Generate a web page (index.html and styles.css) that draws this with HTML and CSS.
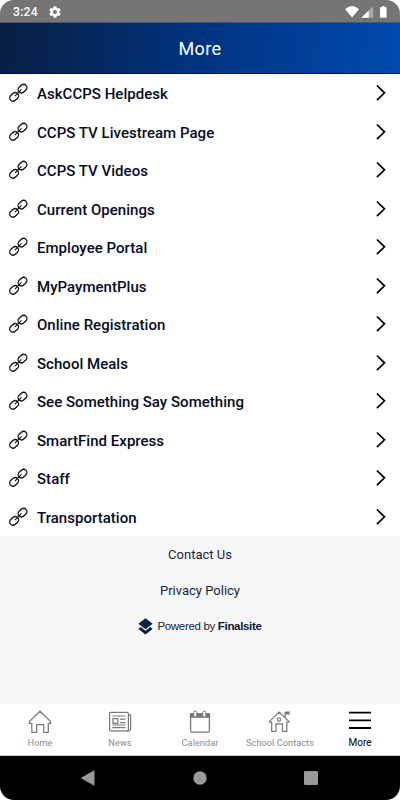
FILE: index.html
```
<!DOCTYPE html>
<html lang="en">
<head>
<meta charset="utf-8">
<title>More</title>
<link rel="stylesheet" href="styles.css">
</head>
<body>
<svg width="0" height="0" class="defs">
  <symbol id="link" viewBox="0 0 20 20">
    <g fill="none" stroke="#111" stroke-width="1.3">
      <rect x="-4.8" y="-3.3" width="9.6" height="6.6" rx="3.3" transform="translate(14.5 5.6) rotate(-43)"/>
      <rect x="-4.8" y="-3.3" width="9.6" height="6.6" rx="3.3" transform="translate(6.1 13.9) rotate(-43)"/>
      <path d="M6.9 13.1 13.5 6.4" stroke-width="1.1"/>
    </g>
  </symbol>
  <symbol id="chev" viewBox="0 0 12 18">
    <path d="M1.9 1.5 9.5 8.8 1.9 16.2" fill="none" stroke="#000" stroke-width="1.7"/>
  </symbol>
</svg>
<div class="screen">
  <div class="status">
    <span class="time">3:24</span>
    <svg class="gear" width="14" height="14" viewBox="2 2 20 20"><path fill="#fff" d="M19.14 12.94c.04-.3.06-.61.06-.94s-.02-.64-.07-.94l2.03-1.58a.49.49 0 0 0 .12-.61l-1.92-3.32a.49.49 0 0 0-.59-.22l-2.39.96a7 7 0 0 0-1.62-.94l-.36-2.54a.48.48 0 0 0-.48-.41h-3.84a.48.48 0 0 0-.47.41l-.36 2.54c-.59.24-1.13.57-1.62.94l-2.39-.96a.48.48 0 0 0-.59.22L2.74 8.87a.48.48 0 0 0 .12.61l2.03 1.58c-.05.3-.09.63-.09.94s.02.64.07.94l-2.03 1.58a.49.49 0 0 0-.12.61l1.92 3.32c.12.22.37.29.59.22l2.39-.96c.5.38 1.03.7 1.62.94l.36 2.54c.05.24.24.41.48.41h3.84c.24 0 .44-.17.47-.41l.36-2.54c.59-.24 1.13-.56 1.62-.94l2.39.96c.22.08.47 0 .59-.22l1.92-3.32a.48.48 0 0 0-.12-.61zM12 15.4a3.4 3.4 0 1 1 0-6.8 3.4 3.4 0 0 1 0 6.8z"/></svg>
    <svg class="signals" width="44" height="14" viewBox="0 0 44 14">
      <path d="M.2 4.2Q7.1-2.2 14 4.2L7.1 12.4z" fill="#fff"/>
      <path d="M28.2 1v11.8H16.4z" fill="#a9a9a9"/><path d="M23.7 5.5v7.3H16.4z" fill="#fff"/>
      <path d="M37 1h2.5v1.2H41.6v10.6H35V2.2h2z" fill="#fff"/>
    </svg>
  </div>
  <header>More</header>
  <main>
    <a class="row"><svg class="link"><use href="#link"/></svg><span>AskCCPS Helpdesk</span><svg class="chev"><use href="#chev"/></svg></a>
    <a class="row"><svg class="link"><use href="#link"/></svg><span>CCPS TV Livestream Page</span><svg class="chev"><use href="#chev"/></svg></a>
    <a class="row"><svg class="link"><use href="#link"/></svg><span>CCPS TV Videos</span><svg class="chev"><use href="#chev"/></svg></a>
    <a class="row"><svg class="link"><use href="#link"/></svg><span>Current Openings</span><svg class="chev"><use href="#chev"/></svg></a>
    <a class="row"><svg class="link"><use href="#link"/></svg><span>Employee Portal</span><svg class="chev"><use href="#chev"/></svg></a>
    <a class="row"><svg class="link"><use href="#link"/></svg><span>MyPaymentPlus</span><svg class="chev"><use href="#chev"/></svg></a>
    <a class="row"><svg class="link"><use href="#link"/></svg><span>Online Registration</span><svg class="chev"><use href="#chev"/></svg></a>
    <a class="row"><svg class="link"><use href="#link"/></svg><span>School Meals</span><svg class="chev"><use href="#chev"/></svg></a>
    <a class="row"><svg class="link"><use href="#link"/></svg><span>See Something Say Something</span><svg class="chev"><use href="#chev"/></svg></a>
    <a class="row"><svg class="link"><use href="#link"/></svg><span>SmartFind Express</span><svg class="chev"><use href="#chev"/></svg></a>
    <a class="row"><svg class="link"><use href="#link"/></svg><span>Staff</span><svg class="chev"><use href="#chev"/></svg></a>
    <a class="row"><svg class="link"><use href="#link"/></svg><span>Transportation</span><svg class="chev"><use href="#chev"/></svg></a>
  </main>
  <section class="info">
    <a>Contact Us</a>
    <a>Privacy Policy</a>
    <div class="powered">
      <svg width="15" height="17" viewBox="0 0 15 17"><path fill="#0a1f44" d="M7.5.3 14.6 5.8 7.5 11.2.4 5.8z"/><path fill="#0a1f44" d="M2.7 9 .4 10.9l7.1 5.6 7.1-5.6L12.3 9 7.5 12.7z"/></svg>
      <span>Powered by <b>Finalsite</b></span>
    </div>
  </section>
  <nav class="tabs">
    <a class="tab"><svg width="26" height="26" viewBox="0 0 26 26" fill="none" stroke="#77777c" stroke-width="1.2"><path d="M2.4 14.3V12.5L13 2.2 23.6 12.5v1.8h-2.3v9.1h-4.6v-7.8H9.7v7.8H4.8v-9.1z"/></svg><span>Home</span></a>
    <a class="tab"><svg width="26" height="26" viewBox="0 0 26 26" fill="none" stroke="#77777c" stroke-width="1.2"><rect x="2.6" y="3.4" width="18.8" height="18.5" rx="1.2"/><path d="M21.4 5.8h2.2v14.3q0 1.8-1.7 1.8H20M5.4 7h13.2M5.4 16h13.2M5.4 18.6h13.2M13 10.2h5.6M13 13.6h5.6"/><rect x="5.9" y="9.7" width="5" height="4.6"/></svg><span>News</span></a>
    <a class="tab"><svg width="26" height="26" viewBox="0 0 26 26" fill="none" stroke="#77777c" stroke-width="1.3"><rect x="3.6" y="4.9" width="18.8" height="18.2" rx="1"/><path d="M3.5 5h19v3.2h-19z" fill="#77777c"/><rect x="6.7" y="2" width="3" height="6" rx="1.5" fill="#fff" stroke-width="1"/><rect x="15.8" y="2" width="3" height="6" rx="1.5" fill="#fff" stroke-width="1"/></svg><span>Calendar</span></a>
    <a class="tab"><svg width="26" height="26" viewBox="0 0 26 26" fill="none" stroke="#77777c" stroke-width="1.2"><path d="M2.5 13.2v-.8L12.2 3.2l9.7 9.2v.8h-2.1v9.1h-4.3v-7.4H9v7.4H4.7v-9.1z"/><circle cx="12.1" cy="10.6" r="1.7"/><path d="M18.2 8.8V3"/><path d="M18.2 2.6h5.1l-1 1.5 1 1.5h-5.1z" fill="#77777c" stroke="none"/></svg><span>School Contacts</span></a>
    <a class="tab active"><svg width="26" height="26" viewBox="0 0 26 26" stroke="#000" stroke-width="1.8"><path d="M2 3.7h22M2 11.3h22M2 19h22"/></svg><span>More</span></a>
  </nav>
  <div class="system">
    <svg width="16" height="18" viewBox="0 0 16 18"><path d="M1.5 9 14 1.9v14.2z" fill="#999" stroke="#999" stroke-linejoin="round"/></svg>
    <svg width="14" height="14" viewBox="0 0 14 14"><circle cx="7" cy="7" r="6.7" fill="#999"/></svg>
    <svg width="14" height="14" viewBox="0 0 14 14"><rect width="14" height="14" rx="1" fill="#999"/></svg>
  </div>
</div>
</body>
</html>
```
FILE: styles.css
```
body { margin: 0; background: #fff; font-family: Roboto, "Liberation Sans", sans-serif; }
.defs { display: block; height: 0; }
.screen { width: 400px; height: 800px; display: flex; flex-direction: column; border-radius: 14px; overflow: hidden; background: #f7f7f7; }
.status { height: 22px; flex: none; background: #757575; color: #fff; display: flex; align-items: center; box-sizing: border-box; padding: 1px 12px 0 13px; }
.time { font-size: 12.2px; font-weight: 500; letter-spacing: .2px; width: 36px; }
.gear { width: 12px; height: 12px; }
.signals { margin-left: auto; margin-right: -1px; }
header { height: 52px; flex: none; box-sizing: border-box; border-top: 1px solid #47567a; border-bottom: 1px solid #00094a; background: linear-gradient(97deg, #081f41 0%, #003584 54%, #004bb0 100%); color: #fff; font-size: 18px; letter-spacing: .4px; text-align: center; line-height: 51px; }
main { background: #fff; flex: none; }
.row { height: 38.5px; display: flex; align-items: center; box-sizing: border-box; padding: 0 13px 0 8px; font-size: 15px; font-weight: 500; letter-spacing: .03px; color: #050b24; }
.row span { flex: 1; padding: 2px 0 0 9px; }
.link { width: 20px; height: 20px; }
.chev { width: 12px; height: 18px; }
.info { flex: 1; display: flex; flex-direction: column; align-items: center; color: #17223e; font-size: 13px; }
.info > a { height: 36px; line-height: 37px; }
.powered { display: flex; align-items: center; gap: 4px; height: 36px; font-family: "Liberation Sans", sans-serif; font-size: 11.5px; letter-spacing: -.32px; }
.powered b { font-weight: 700; color: #0a1738; }
.tabs { height: 53px; flex: none; box-sizing: border-box; display: grid; grid-template-columns: repeat(5, 1fr); background: #fff; border-top: 1px solid #f3f3f3; border-bottom: 1px solid #ccc; }
.tab { display: flex; flex-direction: column; align-items: center; padding-top: 5px; color: #8b8b8f; font-size: 9.2px; line-height: 12px; white-space: nowrap; letter-spacing: .05px; }
.tab span { margin-top: 2px; }
.active { color: #000; font-size: 10px; }
.system { height: 44px; flex: none; background: #000; display: flex; align-items: center; justify-content: space-between; padding: 0 82px 0 80px; }
```
